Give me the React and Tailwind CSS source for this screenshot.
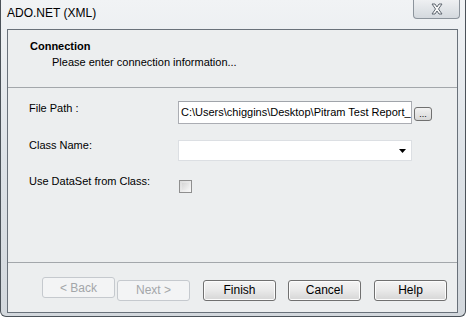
import React from "react";

const font = { fontFamily: '"Liberation Sans", Arial, sans-serif' };

function WizardButton({ children, disabled }) {
  return (
    <button
      type="button"
      disabled={disabled}
      className={
        disabled
          ? "w-[73px] h-[21px] rounded-[3px] border border-[#c5c9ce] bg-[#f3f4f5] text-[12px] text-[#a3a6a9]"
          : "w-[73px] h-[21px] rounded-[3px] border border-[#707070] bg-gradient-to-b from-[#f4f4f4] via-[#e9e9e9] to-[#d6d6d6] text-[12px] text-black shadow-[inset_0_0_0_1px_#fcfcfc]"
      }
    >
      {children}
    </button>
  );
}

export default function App() {
  return (
    <div
      className="w-[466px] h-[317px] flex flex-col bg-gradient-to-b from-[#f1f3f5] via-[#dde2e7] to-[#d3d8dd] border-x border-b border-[#4b5259] rounded-b-[6px] overflow-hidden"
      style={font}
    >
      {/* barra de titulo */}
      <div className="h-[29px] flex items-start justify-between shrink-0">
        <span className="pl-[6px] pt-[6px] text-[12px] leading-[15px] text-black">
          ADO.NET (XML)
        </span>
        <div className="mr-[5px] w-[47px] h-[19px] rounded-b-[4px] border border-t-0 border-[#8c949c] bg-gradient-to-b from-[#eef0f2] to-[#d4d9de] flex items-center justify-center">
          <svg width="16" height="12" viewBox="0 0 16 12">
            <path d="M3 1h3l2 3 2-3h3l-3.5 5L13 11h-3L8 8l-2 3H3l3.5-5z" fill="#f8f8f8" stroke="#5f6770" strokeWidth="1" strokeLinejoin="round" />
          </svg>
        </div>
      </div>

      {/* area cliente */}
      <div className="ml-[6px] mr-[7px] mb-[3px] flex-1 flex flex-col border border-[#69717a] bg-[#eceeef]">
        {/* encabezado */}
        <div className="h-[58px] shrink-0 border-b border-[#a3a7ab] pl-[22px] pt-[9px]">
          <div className="text-[11px] font-bold leading-[14px] text-black">Connection</div>
          <div className="pl-[22px] pt-[2px] text-[11px] leading-[14px] text-black">
            Please enter connection information...
          </div>
        </div>

        {/* formulario */}
        <div className="flex-1 flex flex-col pl-[21px] pt-[13px]">
          <div className="flex items-center h-[23px]">
            <span className="w-[149px] text-[11px] text-black -mt-[8px]">File Path :</span>
            <div className="w-[234px] h-[23px] border border-[#abadb3] border-t-[#a0a4aa] bg-white flex items-center pl-[2px] overflow-hidden">
              <span className="text-[11px] text-black whitespace-nowrap">
                C:\Users\chiggins\Desktop\Pitram Test Report_
              </span>
            </div>
            <button
              type="button"
              className="ml-[2px] mt-[3px] w-[18px] h-[14px] rounded-[3px] border border-[#707070] bg-gradient-to-b from-[#f2f2f2] to-[#d8d8d8] text-[9px] leading-[8px] text-black"
            >
              ...
            </button>
          </div>

          <div className="flex items-center h-[21px] mt-[16px]">
            <span className="w-[149px] text-[11px] text-black -mt-[11px]">Class Name:</span>
            <div className="w-[234px] h-[21px] border border-[#dcdfe3] bg-white flex items-center justify-end pr-[5px]">
              <svg width="7" height="4" viewBox="0 0 7 4">
                <path d="M0 0h7L3.5 4z" fill="#000" />
              </svg>
            </div>
          </div>

          <div className="flex items-center h-[14px] mt-[18px]">
            <span className="w-[150px] text-[11px] text-black -mt-[10px]">Use DataSet from Class:</span>
            <div className="w-[13px] h-[13px] border border-[#8f8f8f] bg-gradient-to-br from-[#dcdcdc] to-[#f8f8f8] p-[2px]">
              <div className="w-full h-full bg-gradient-to-br from-[#d6d6d6] to-[#f4f4f4]" />
            </div>
          </div>
        </div>

        {/* botones */}
        <div className="h-[50px] shrink-0 border-t border-[#a3a7ab] flex items-start pt-[14px] pl-[34px]">
          <WizardButton disabled>&lt; Back</WizardButton>
          <div className="ml-[2px]">
            <WizardButton disabled>Next &gt;</WizardButton>
          </div>
          <div className="ml-[13px]">
            <WizardButton>Finish</WizardButton>
          </div>
          <div className="ml-[12px]">
            <WizardButton>Cancel</WizardButton>
          </div>
          <div className="ml-[13px]">
            <WizardButton>Help</WizardButton>
          </div>
        </div>
      </div>
    </div>
  );
}
